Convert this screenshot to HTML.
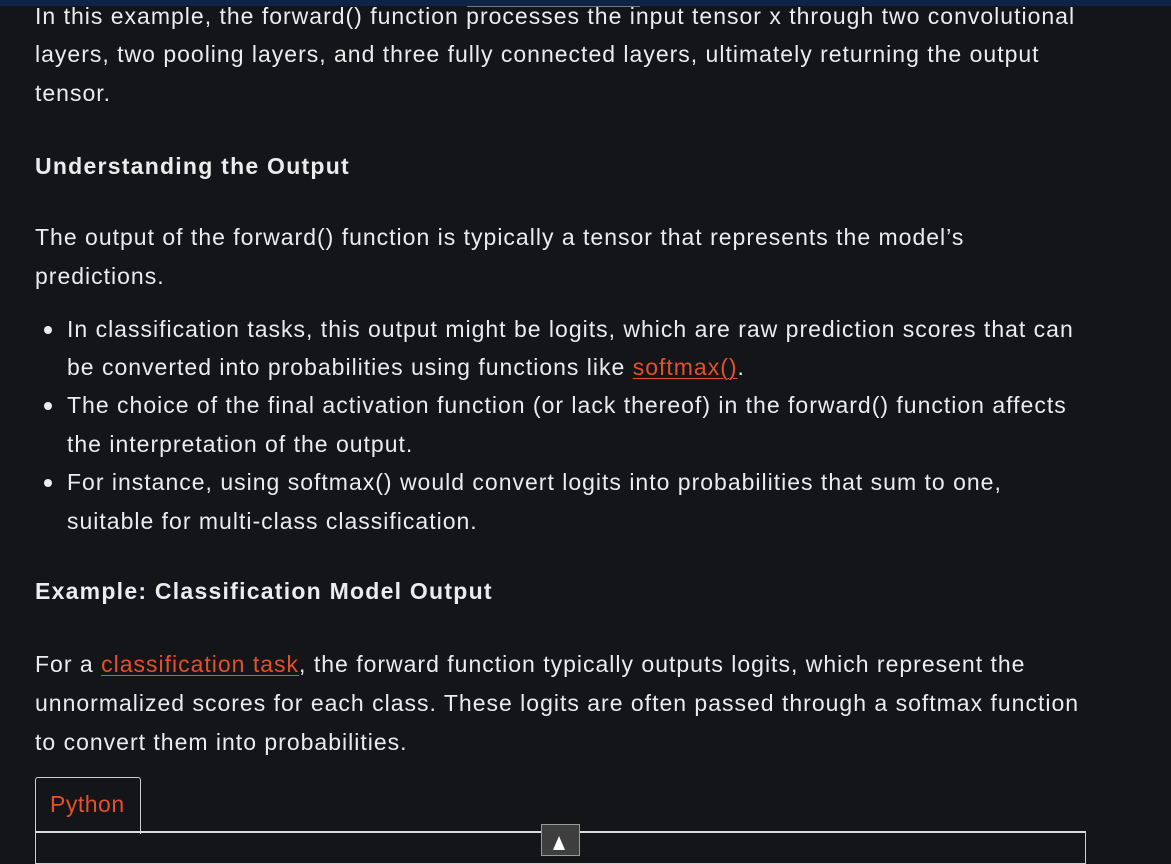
<!DOCTYPE html>
<html><head><meta charset="utf-8"><style>
html,body{margin:0;padding:0;}
body{width:1171px;height:850px;overflow:hidden;background:#141519;color:#ececec;font-family:"Liberation Sans",sans-serif;font-size:23px;letter-spacing:1px;position:relative;}
.topbar{position:absolute;left:0;top:0;width:1171px;height:6px;background:#0d2447;}
.l{position:absolute;white-space:nowrap;line-height:39px;}
.h{font-weight:bold;letter-spacing:1.25px;}
a{color:#e5502a;text-decoration:underline;text-decoration-thickness:1px;text-underline-offset:3px;}
.dot{position:absolute;width:8px;height:8px;border-radius:50%;background:#ececec;}
</style></head><body>
<div class="topbar"></div>
<div style="position:absolute;left:467px;top:6px;width:173px;height:1px;background:#777"></div>
<div class="l" style="left:35px;top:-3px">In this example, the forward() function processes the input tensor x through two convolutional</div>
<div class="l" style="left:35px;top:35px">layers, two pooling layers, and three fully connected layers, ultimately returning the output</div>
<div class="l" style="left:35px;top:74px">tensor.</div>
<div class="l h" style="left:35px;top:147px">Understanding the Output</div>
<div class="l" style="left:35px;top:218px">The output of the forward() function is typically a tensor that represents the model’s</div>
<div class="l" style="left:35px;top:257px">predictions.</div>
<div class="dot" style="left:44px;top:326px"></div>
<div class="l" style="left:67px;top:310px">In classification tasks, this output might be logits, which are raw prediction scores that can</div>
<div class="l" style="left:67px;top:348px">be converted into probabilities using functions like <a>softmax()</a>.</div>
<div class="dot" style="left:44px;top:402px"></div>
<div class="l" style="left:67px;top:386px">The choice of the final activation function (or lack thereof) in the forward() function affects</div>
<div class="l" style="left:67px;top:425px">the interpretation of the output.</div>
<div class="dot" style="left:44px;top:479px"></div>
<div class="l" style="left:67px;top:463px">For instance, using softmax() would convert logits into probabilities that sum to one,</div>
<div class="l" style="left:67px;top:502px">suitable for multi-class classification.</div>
<div class="l h" style="left:35px;top:572px">Example: Classification Model Output</div>
<div class="l" style="left:35px;top:645px">For a <a>classification task</a>, the forward function typically outputs logits, which represent the</div>
<div class="l" style="left:35px;top:684px">unnormalized scores for each class. These logits are often passed through a softmax function</div>
<div class="l" style="left:35px;top:723px">to convert them into probabilities.</div>
<div style="position:absolute;left:35px;top:777px;width:104px;height:56px;border:1px solid #cfcfcf;border-bottom:none;border-radius:3px 3px 0 0;"></div>
<div class="l" style="left:50px;top:785px;color:#e5502a;letter-spacing:0.5px">Python</div>
<div style="position:absolute;left:35px;top:831px;width:1049px;height:30px;border:1px solid #cfcfcf;border-top:2px solid #dcdcdc;"></div>
<div style="position:absolute;left:541px;top:824px;width:37px;height:30px;background:#3e3e3e;border:1px solid #999;"></div>
<div style="position:absolute;left:553px;top:836px;width:0;height:0;border-left:6px solid transparent;border-right:6px solid transparent;border-bottom:14px solid #fff;"></div>
</body></html>
